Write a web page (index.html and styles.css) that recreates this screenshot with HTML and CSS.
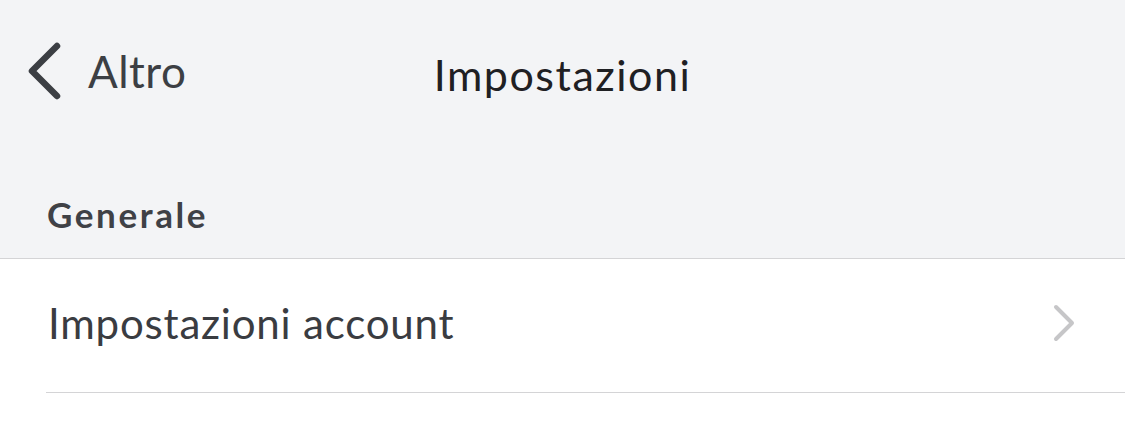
FILE: index.html
```html
<!DOCTYPE html>
<html lang="it">
<head>
<meta charset="utf-8">
<link rel="stylesheet" href="styles.css">
</head>
<body>
<div class="top">
  <div class="nav">
    <div class="back">
      <svg class="back-icon" width="40" height="60" viewBox="0 0 40 60"><path d="M32 5 L7 30 L32 55" fill="none" stroke="#3c3f44" stroke-width="6.5" stroke-linecap="round" stroke-linejoin="round"/></svg>
      <span class="back-label">Altro</span>
    </div>
    <div class="title">Impostazioni</div>
  </div>
  <div class="section">Generale</div>
</div>
<div class="list">
  <div class="row">
    <span class="row-label">Impostazioni account</span>
    <svg class="chev" width="26" height="40" viewBox="0 0 26 40"><path d="M5 4 L21 20 L5 36" fill="none" stroke="#c6c6c8" stroke-width="4" stroke-linecap="round" stroke-linejoin="round"/></svg>
  </div>
</div>
</body>
</html>
```
FILE: styles.css
```css
html, body { margin: 0; padding: 0; }
body {
  width: 1125px;
  height: 433px;
  overflow: hidden;
  background: #ffffff;
  font-family: Lato, "Noto Sans", sans-serif;
}
.top {
  background: #f3f4f6;
  height: 258px;
  border-bottom: 1px solid #d4d4d6;
  display: flex;
  flex-direction: column;
}
.nav {
  position: relative;
  height: 150px;
  display: flex;
  align-items: center;
  justify-content: center;
}
.back {
  position: absolute;
  left: 25px;
  top: 41px;
  display: flex;
  align-items: center;
  gap: 23px;
}
.back-icon { display: block; }
.back-label {
  font-size: 44px;
  color: #3c3f44;
  line-height: 60px;
  letter-spacing: 0.5px;
}
.title {
  font-size: 43px;
  color: #1f2023;
  line-height: 60px;
  letter-spacing: 1.5px;
  margin-top: -1px;
}
.section {
  padding-left: 47px;
  font-size: 35px;
  font-weight: 700;
  color: #3f4146;
  line-height: 40px;
  letter-spacing: 2.6px;
  margin-top: 44px;
}
.list { padding-left: 46px; }
.row {
  height: 133px;
  border-bottom: 1px solid #d4d4d6;
  display: flex;
  align-items: center;
  justify-content: space-between;
  padding-right: 48px;
}
.row-label {
  font-size: 42px;
  color: #3a3c41;
  margin-left: 2px;
  margin-top: -6px;
  letter-spacing: 0.8px;
}
.chev { display: block; margin-top: -5px; }
```
